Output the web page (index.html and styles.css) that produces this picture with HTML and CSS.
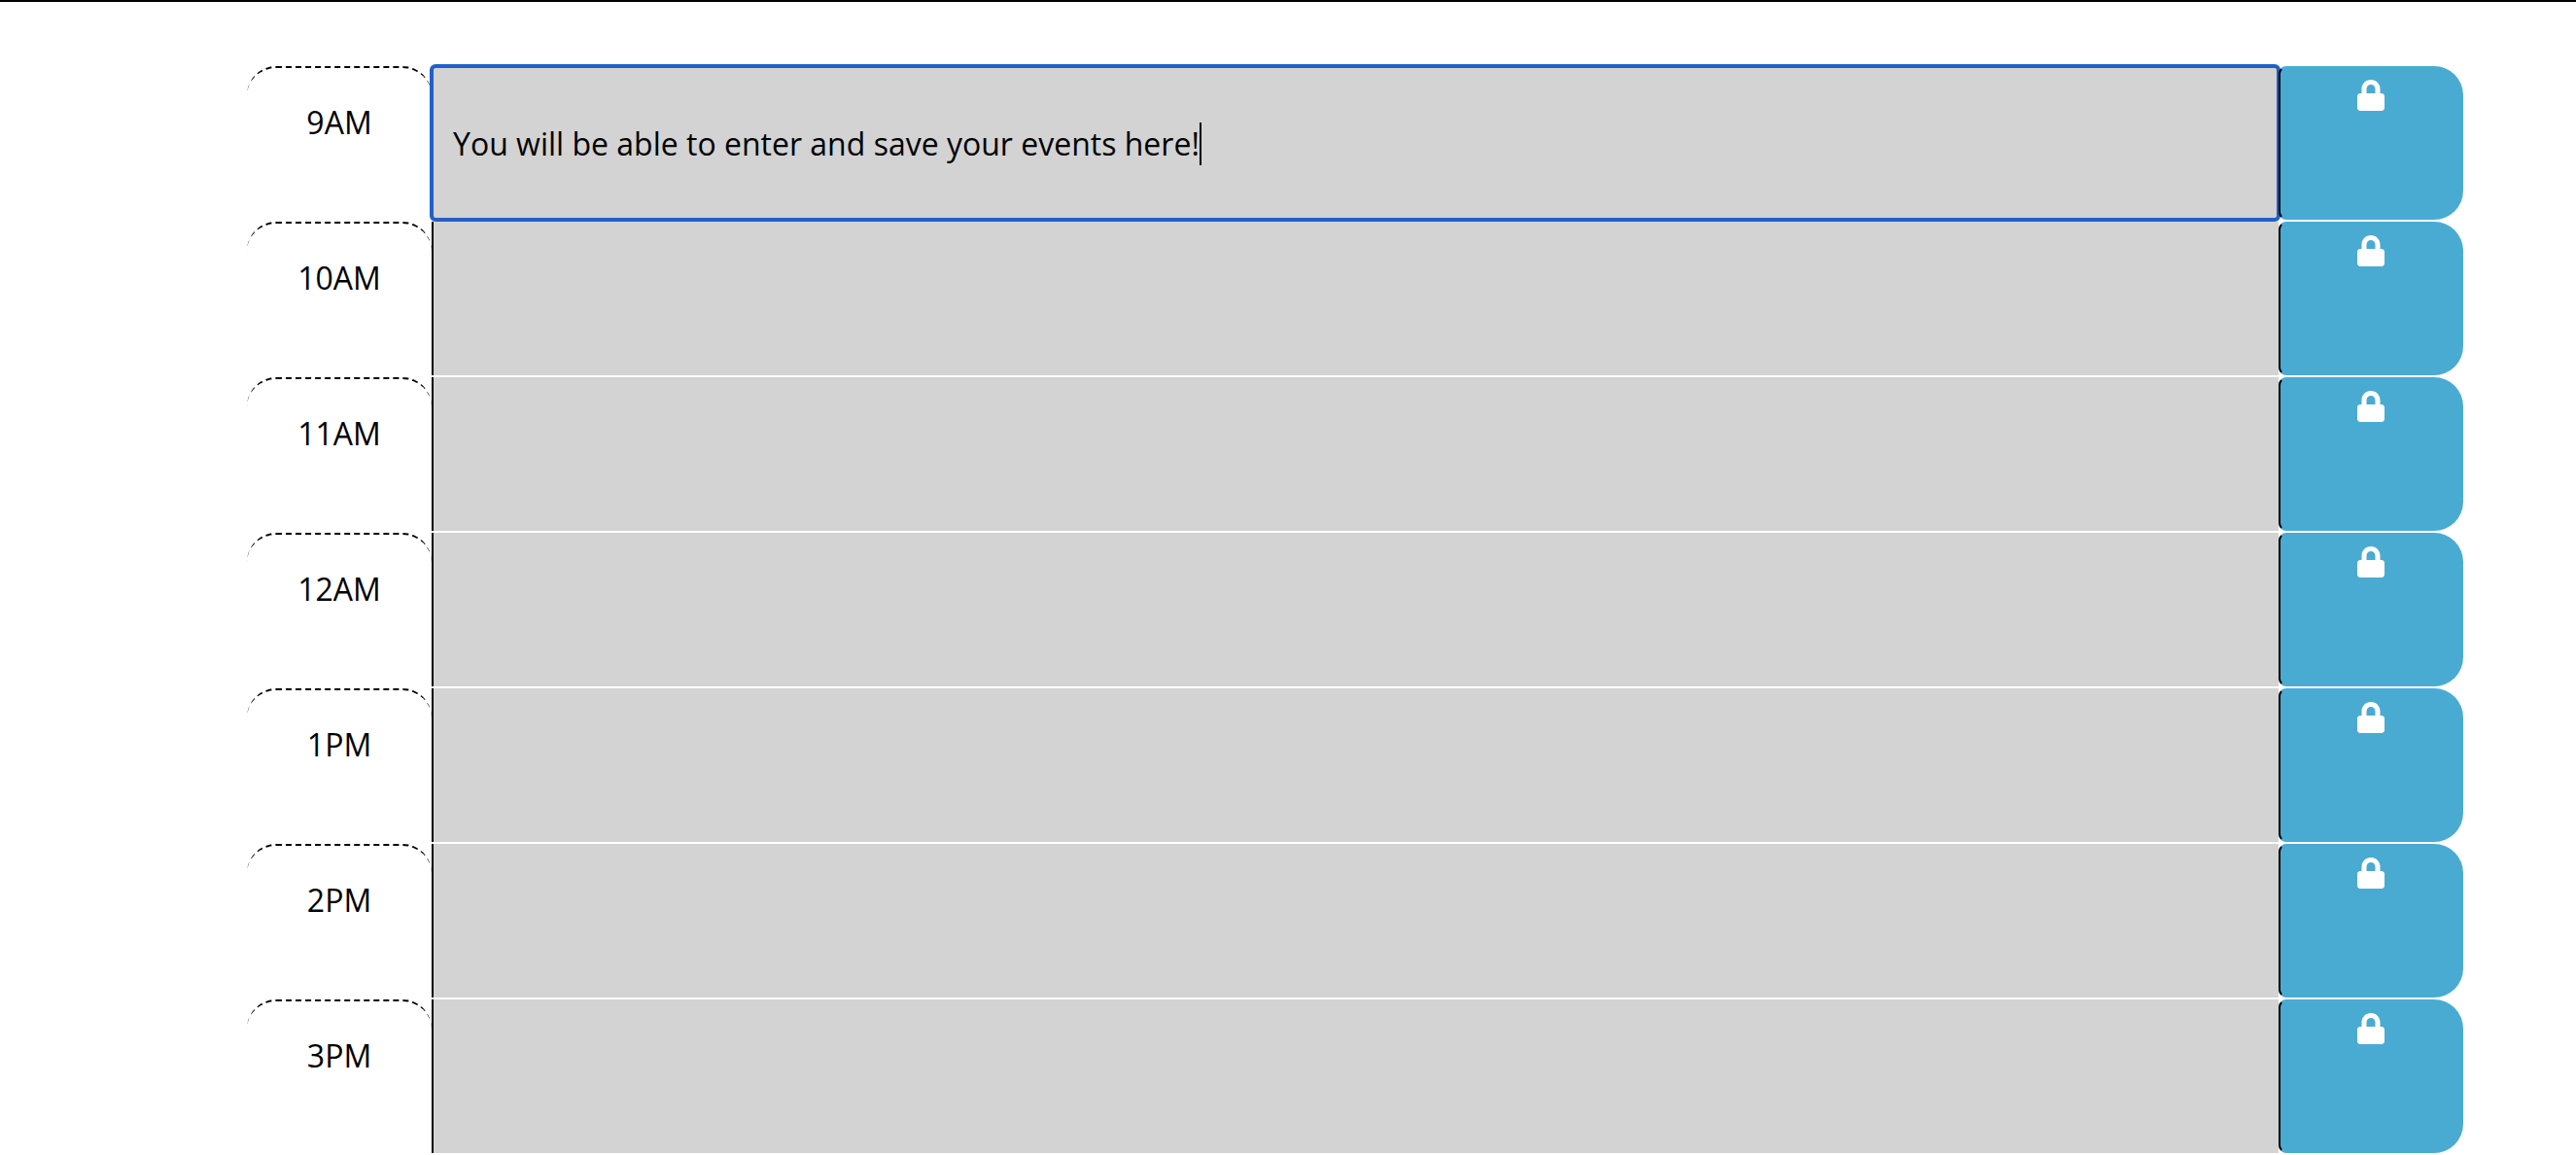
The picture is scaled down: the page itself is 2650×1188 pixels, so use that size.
FILE: index.html
```html
<!DOCTYPE html>
<html lang="en">
<head>
<meta charset="utf-8">
<meta name="viewport" content="width=device-width, initial-scale=1">
<title>Work Day Scheduler</title>
<link rel="stylesheet" href="styles.css">
</head>
<body>
<svg class="sprite" aria-hidden="true">
  <symbol id="lock" viewBox="0 0 448 512"><path d="M400 224h-24v-72C376 68.2 307.8 0 224 0S72 68.2 72 152v72H48c-26.5 0-48 21.5-48 48v192c0 26.5 21.5 48 48 48h352c26.500 0 48-21.500 48-48V272c0-26.500-21.500-48-48-48zm-104 0H152v-72c0-39.700 32.300-72 72-72s72 32.300 72 72v72z"/></symbol>
</svg>
<main class="planner">
  <div class="time-block">
    <label class="hour" for="event-9">9AM</label>
    <div class="entry">
      <input class="event event-active" id="event-9" type="text" value="You will be able to enter and save your events here!">
      <span class="caret"></span>
    </div>
    <button class="save" type="button" aria-label="Save 9AM"><svg class="icon"><use href="#lock"/></svg></button>
  </div>
  <div class="time-block">
    <label class="hour" for="event-10">10AM</label>
    <div class="entry"><input class="event" id="event-10" type="text"></div>
    <button class="save" type="button" aria-label="Save 10AM"><svg class="icon"><use href="#lock"/></svg></button>
  </div>
  <div class="time-block">
    <label class="hour" for="event-11">11AM</label>
    <div class="entry"><input class="event" id="event-11" type="text"></div>
    <button class="save" type="button" aria-label="Save 11AM"><svg class="icon"><use href="#lock"/></svg></button>
  </div>
  <div class="time-block">
    <label class="hour" for="event-12">12AM</label>
    <div class="entry"><input class="event" id="event-12" type="text"></div>
    <button class="save" type="button" aria-label="Save 12AM"><svg class="icon"><use href="#lock"/></svg></button>
  </div>
  <div class="time-block">
    <label class="hour" for="event-13">1PM</label>
    <div class="entry"><input class="event" id="event-13" type="text"></div>
    <button class="save" type="button" aria-label="Save 1PM"><svg class="icon"><use href="#lock"/></svg></button>
  </div>
  <div class="time-block">
    <label class="hour" for="event-14">2PM</label>
    <div class="entry"><input class="event" id="event-14" type="text"></div>
    <button class="save" type="button" aria-label="Save 2PM"><svg class="icon"><use href="#lock"/></svg></button>
  </div>
  <div class="time-block">
    <label class="hour" for="event-15">3PM</label>
    <div class="entry"><input class="event" id="event-15" type="text"></div>
    <button class="save" type="button" aria-label="Save 3PM"><svg class="icon"><use href="#lock"/></svg></button>
  </div>
</main>
</body>
</html>
```
FILE: styles.css
```css
* {
  box-sizing: border-box;
}

body {
  margin: 0;
  border-top: 2px solid #000;
  background: #fff;
  color: #000;
  font-family: "Open Sans", "Noto Sans", sans-serif;
  font-size: 32px;
  line-height: 44px;
}

.sprite {
  display: none;
}

.planner {
  display: flex;
  flex-direction: column;
  gap: 2px;
  padding: 66px 116px 2px 254px;
}

.time-block {
  display: grid;
  grid-template-columns: 1fr 10fr 1fr;
  min-height: 158px;
}

.hour {
  padding-top: 34px;
  border-top: 2px dashed #000;
  border-radius: 30px;
  text-align: center;
}

.entry {
  position: relative;
  display: flex;
}

.event {
  flex: 1;
  min-width: 0;
  margin: 0;
  padding: 2px 20px 0;
  border: 0;
  border-left: 2px solid #000;
  border-radius: 0;
  background: #d3d3d3;
  color: inherit;
  font: inherit;
}

.event:focus,
.event-active {
  border-radius: 4px;
  outline: 4px solid #2060c8;
  outline-offset: -2px;
}

.caret {
  position: absolute;
  top: 58px;
  left: 790px;
  width: 2px;
  height: 44px;
  background: #000;
}

.save {
  position: relative;
  display: flex;
  justify-content: center;
  align-items: flex-start;
  padding: 12px 0;
  border: 2px solid #4aabd2;
  border-left-color: #000;
  border-radius: 8px 30px 30px 8px;
  background: #4aabd2;
  color: #fff;
  cursor: pointer;
}

.icon {
  width: 28px;
  height: 32px;
  fill: currentColor;
}
```
